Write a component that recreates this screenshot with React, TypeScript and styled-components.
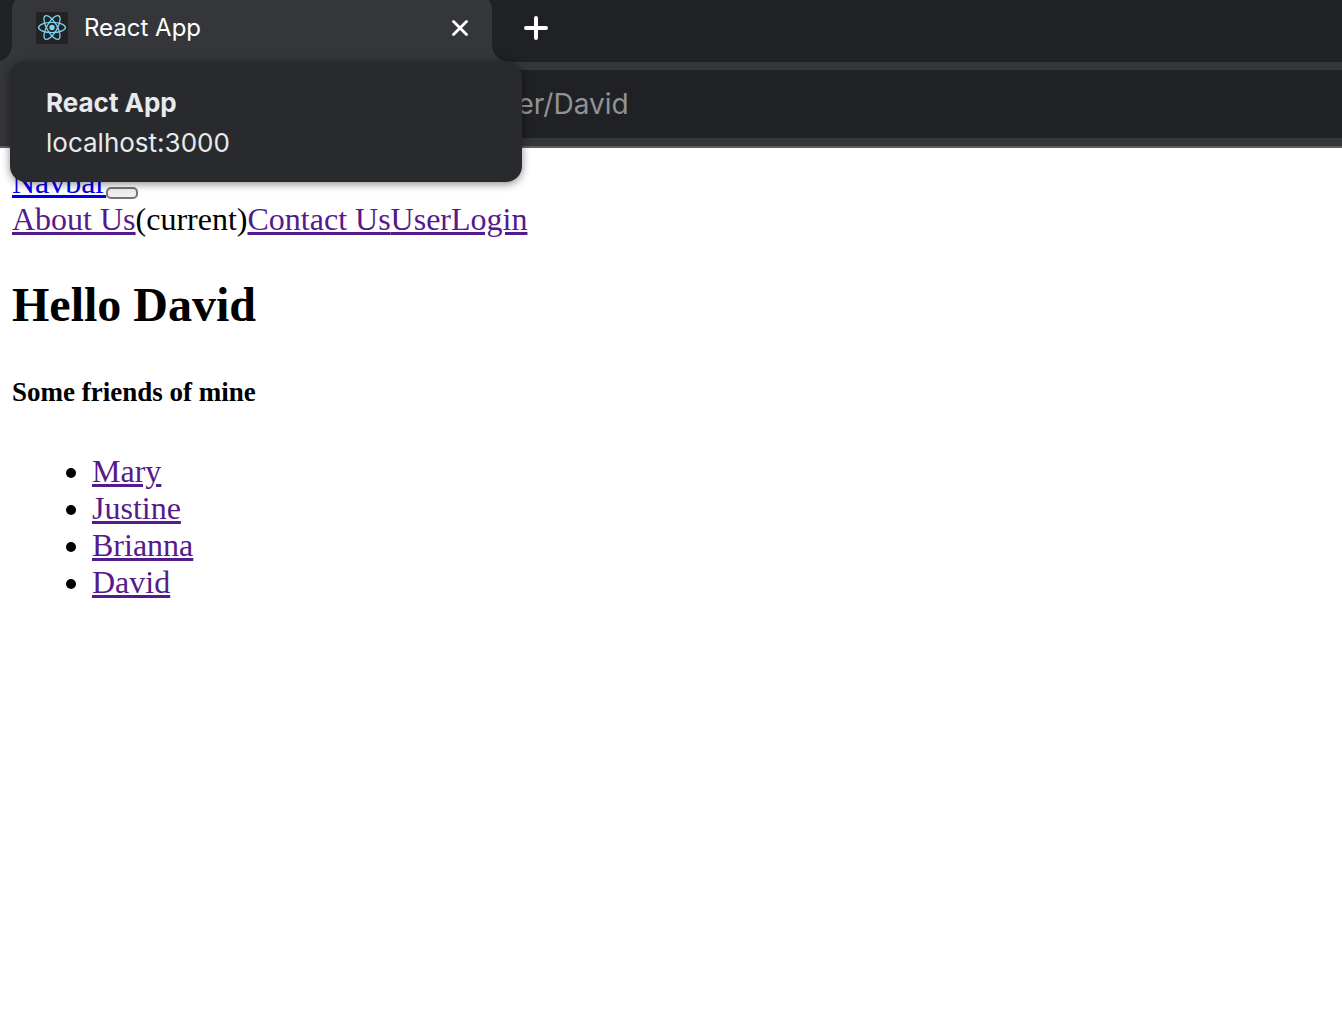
import React, { useState } from "react";
import styled, { createGlobalStyle } from "styled-components";

const GlobalStyle = createGlobalStyle`
  *, *::before, *::after { box-sizing: border-box; }
  body { margin: 0; background: #fff; }
`;

const uiFont = `Inter, "Liberation Sans", sans-serif`;

const Browser = styled.div`
  position: relative;
  font-family: ${uiFont};
`;

const TabStrip = styled.header`
  display: flex;
  height: 62px;
  padding: 0 12px;
  overflow: hidden;
  background: #202124;
`;

const Tab = styled.div`
  position: relative;
  display: flex;
  align-items: center;
  gap: 16px;
  width: 480px;
  margin-top: -6px;
  padding: 0 24px;
  border-radius: 16px 16px 0 0;
  background: #35363a;
  color: #fff;

  &::before,
  &::after {
    content: "";
    position: absolute;
    bottom: 0;
    width: 16px;
    height: 16px;
  }
  &::before {
    right: 100%;
    background: radial-gradient(circle at 0 0, #202124 15px, #35363a 16px);
  }
  &::after {
    left: 100%;
    background: radial-gradient(circle at 100% 0, #202124 15px, #35363a 16px);
  }
`;

const TabTitle = styled.span`
  flex: 1;
  font-size: 24px;
  line-height: 32px;
`;

const IconButton = styled.button`
  display: flex;
  flex: none;
  align-items: center;
  justify-content: center;
  padding: 0;
  border: 0;
  background: none;
  color: #fff;
`;

const NewTabButton = styled(IconButton)`
  height: 56px;
  margin-left: 32px;
`;

const Toolbar = styled.div`
  display: flex;
  height: 86px;
  padding: 8px 0 8px 230px;
  border-bottom: 2px solid #5d5e61;
  background: #35363a;
`;

const AddressInput = styled.input`
  flex: 1;
  min-width: 0;
  padding: 0 32px 0 48px;
  border: 0;
  border-radius: 34px 0 0 34px;
  outline: 0;
  background: #202124;
  color: #919294;
  font: 28px ${uiFont};
`;

const HoverCard = styled.div`
  position: absolute;
  top: 61px;
  left: 10px;
  width: 512px;
  padding: 22px 36px 19px;
  border-radius: 16px;
  background: #292a2d;
  box-shadow: 0 2px 8px rgba(0, 0, 0, 0.45);
  color: #e8eaed;
  font-size: 26px;
  line-height: 40px;
`;

const CardTitle = styled.div`
  font-weight: 700;
`;

const Page = styled.div`
  padding: 16px 12px;
  color: #000;
  font: 32px/37px "Liberation Serif", "Times New Roman", serif;
`;

const PageLink = styled.a<{ $visited?: boolean }>`
  color: ${(p) => (p.$visited ? "#551a8b" : "#0000ee")};
  text-decoration: underline;
`;

const Brand = styled.div`
  display: flex;
  align-items: flex-end;
`;

const Toggler = styled.button`
  width: 32px;
  height: 12px;
  margin-bottom: 2px;
  padding: 0;
  border: 2px solid #767676;
  border-radius: 5px;
  background: #efefef;
`;

const Title = styled.h1`
  margin: 39px 0 45px;
  font-size: 48px;
  line-height: 55px;
`;

const Subtitle = styled.h5`
  margin: 0 0 45px;
  font-size: 27px;
  line-height: 31px;
`;

const Friends = styled.ul`
  margin: 0;
  padding-left: 80px;
`;

const ReactLogo = () => (
  <svg width="32" height="32" viewBox="0 0 32 32" aria-hidden="true">
    <rect width="32" height="32" rx="3" fill="#222" />
    <g fill="none" stroke="#7cd3f3" strokeWidth="1.3">
      <ellipse cx="16" cy="15.5" rx="13.4" ry="5.1" />
      <ellipse cx="16" cy="15.5" rx="13.4" ry="5.1" transform="rotate(60 16 15.5)" />
      <ellipse cx="16" cy="15.5" rx="13.4" ry="5.1" transform="rotate(120 16 15.5)" />
    </g>
    <circle cx="16" cy="15.5" r="2.7" fill="#7cd3f3" />
  </svg>
);

const friends = ["Mary", "Justine", "Brianna", "David"];

export default function App() {
  const [url, setUrl] = useState("localhost:3000/user/David");
  return (
    <>
      <GlobalStyle />
      <Browser>
        <TabStrip>
          <Tab>
            <ReactLogo />
            <TabTitle>React App</TabTitle>
            <IconButton type="button" aria-label="Close tab">
              <svg width="16" height="16" viewBox="0 0 16 16" stroke="currentColor" strokeWidth="2.8" strokeLinecap="round">
                <path d="M1.5 1.5 14.5 14.5M14.5 1.5 1.5 14.5" />
              </svg>
            </IconButton>
          </Tab>
          <NewTabButton type="button" aria-label="New tab">
            <svg width="24" height="24" viewBox="0 0 24 24" stroke="currentColor" strokeWidth="4" strokeLinecap="round">
              <path d="M12 2V22M2 12H22" />
            </svg>
          </NewTabButton>
        </TabStrip>
        <Toolbar>
          <AddressInput aria-label="Address" value={url} onChange={(e) => setUrl(e.target.value)} />
        </Toolbar>
        <HoverCard role="tooltip">
          <CardTitle>React App</CardTitle>
          <div>localhost:3000</div>
        </HoverCard>
      </Browser>
      <Page>
        <nav>
          <Brand>
            <PageLink href="#">Navbar</PageLink>
            <Toggler type="button" aria-label="Toggle navigation" />
          </Brand>
          <div>
            <PageLink $visited href="#about">About Us</PageLink>
            <span>(current)</span>
            <PageLink $visited href="#contact">Contact Us</PageLink>
            <PageLink $visited href="#user">User</PageLink>
            <PageLink $visited href="#login">Login</PageLink>
          </div>
        </nav>
        <main>
          <Title>Hello David</Title>
          <Subtitle>Some friends of mine</Subtitle>
          <Friends>
            {friends.map((name) => (
              <li key={name}>
                <PageLink $visited href={`#${name}`}>{name}</PageLink>
              </li>
            ))}
          </Friends>
        </main>
      </Page>
    </>
  );
}
